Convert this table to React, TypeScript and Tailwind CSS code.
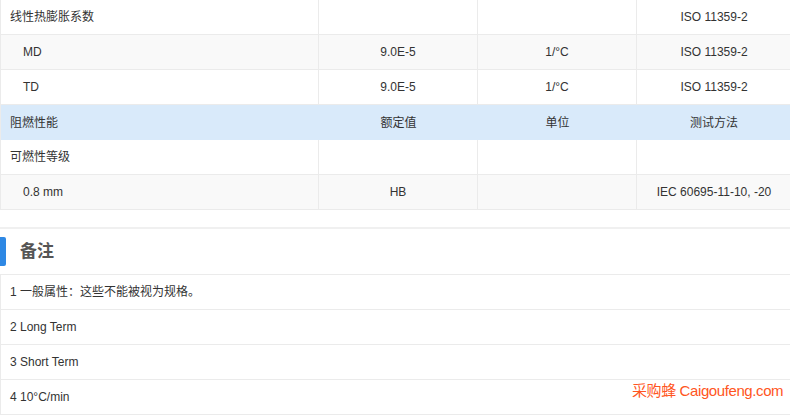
const rows = [
  { name: "线性热膨胀系数", value: "", unit: "", method: "ISO 11359-2", sub: false, shade: false },
  { name: "MD", value: "9.0E-5", unit: "1/°C", method: "ISO 11359-2", sub: true, shade: true },
  { name: "TD", value: "9.0E-5", unit: "1/°C", method: "ISO 11359-2", sub: true, shade: false },
];

const flame = [
  { name: "可燃性等级", value: "", unit: "", method: "", sub: false, shade: false },
  { name: "0.8 mm", value: "HB", unit: "", method: "IEC 60695-11-10, -20", sub: true, shade: true },
];

const notes = ["1 一般属性：这些不能被视为规格。", "2 Long Term", "3 Short Term", "4 10°C/min"];

type Row = (typeof rows)[number];

function DataRow({ row }: { row: Row }) {
  return (
    <div className={`grid h-[35px] grid-cols-[318px_159px_159px_154px] border-b border-[#ebebeb] ${row.shade ? "bg-[#f9f9f9]" : "bg-white"}`}>
      <div className={`flex items-center border-r border-[#ebebeb] ${row.sub ? "pl-[22px]" : "pl-[9px]"}`}>{row.name}</div>
      <div className="flex items-center justify-center border-r border-[#ebebeb]">{row.value}</div>
      <div className="flex items-center justify-center border-r border-[#ebebeb]">{row.unit}</div>
      <div className="flex items-center justify-center">{row.method}</div>
    </div>
  );
}

export default function App() {
  return (
    <div className="relative h-[415px] w-[790px] overflow-hidden bg-white text-[12px] text-[#333]" style={{ fontFamily: '"Liberation Sans", Arial, "Noto Sans CJK SC", sans-serif' }}>
      <div className="border-l border-[#ebebeb]">
        {rows.map((r) => (
          <DataRow key={r.name} row={r} />
        ))}
        <div className="grid h-[35px] grid-cols-[318px_159px_159px_154px] bg-[#d9eafa]">
          <div className="flex items-center pl-[9px]">阻燃性能</div>
          <div className="flex items-center justify-center">额定值</div>
          <div className="flex items-center justify-center">单位</div>
          <div className="flex items-center justify-center">测试方法</div>
        </div>
        {flame.map((r) => (
          <DataRow key={r.name} row={r} />
        ))}
      </div>

      <div className="mt-[17px] border-t-2 border-[#f0f0f0]">
        <div className="flex h-[46px] items-center border-b border-[#ebebeb]">
          <div className="h-[29px] w-[6px] rounded-r-[2px] bg-[#2e88e4]" />
          <div className="ml-[14px] text-[17px] font-bold text-[#555]">备注</div>
        </div>
        {notes.map((n) => (
          <div key={n} className="flex h-[35px] items-center border-b border-l border-[#ebebeb] pl-[9px]">
            {n}
          </div>
        ))}
      </div>

      <div className="absolute left-[632px] top-[380px] whitespace-nowrap text-[15px] tracking-[-0.4px] text-[#ff5522]">采购蜂 Caigoufeng.com</div>
    </div>
  );
}
